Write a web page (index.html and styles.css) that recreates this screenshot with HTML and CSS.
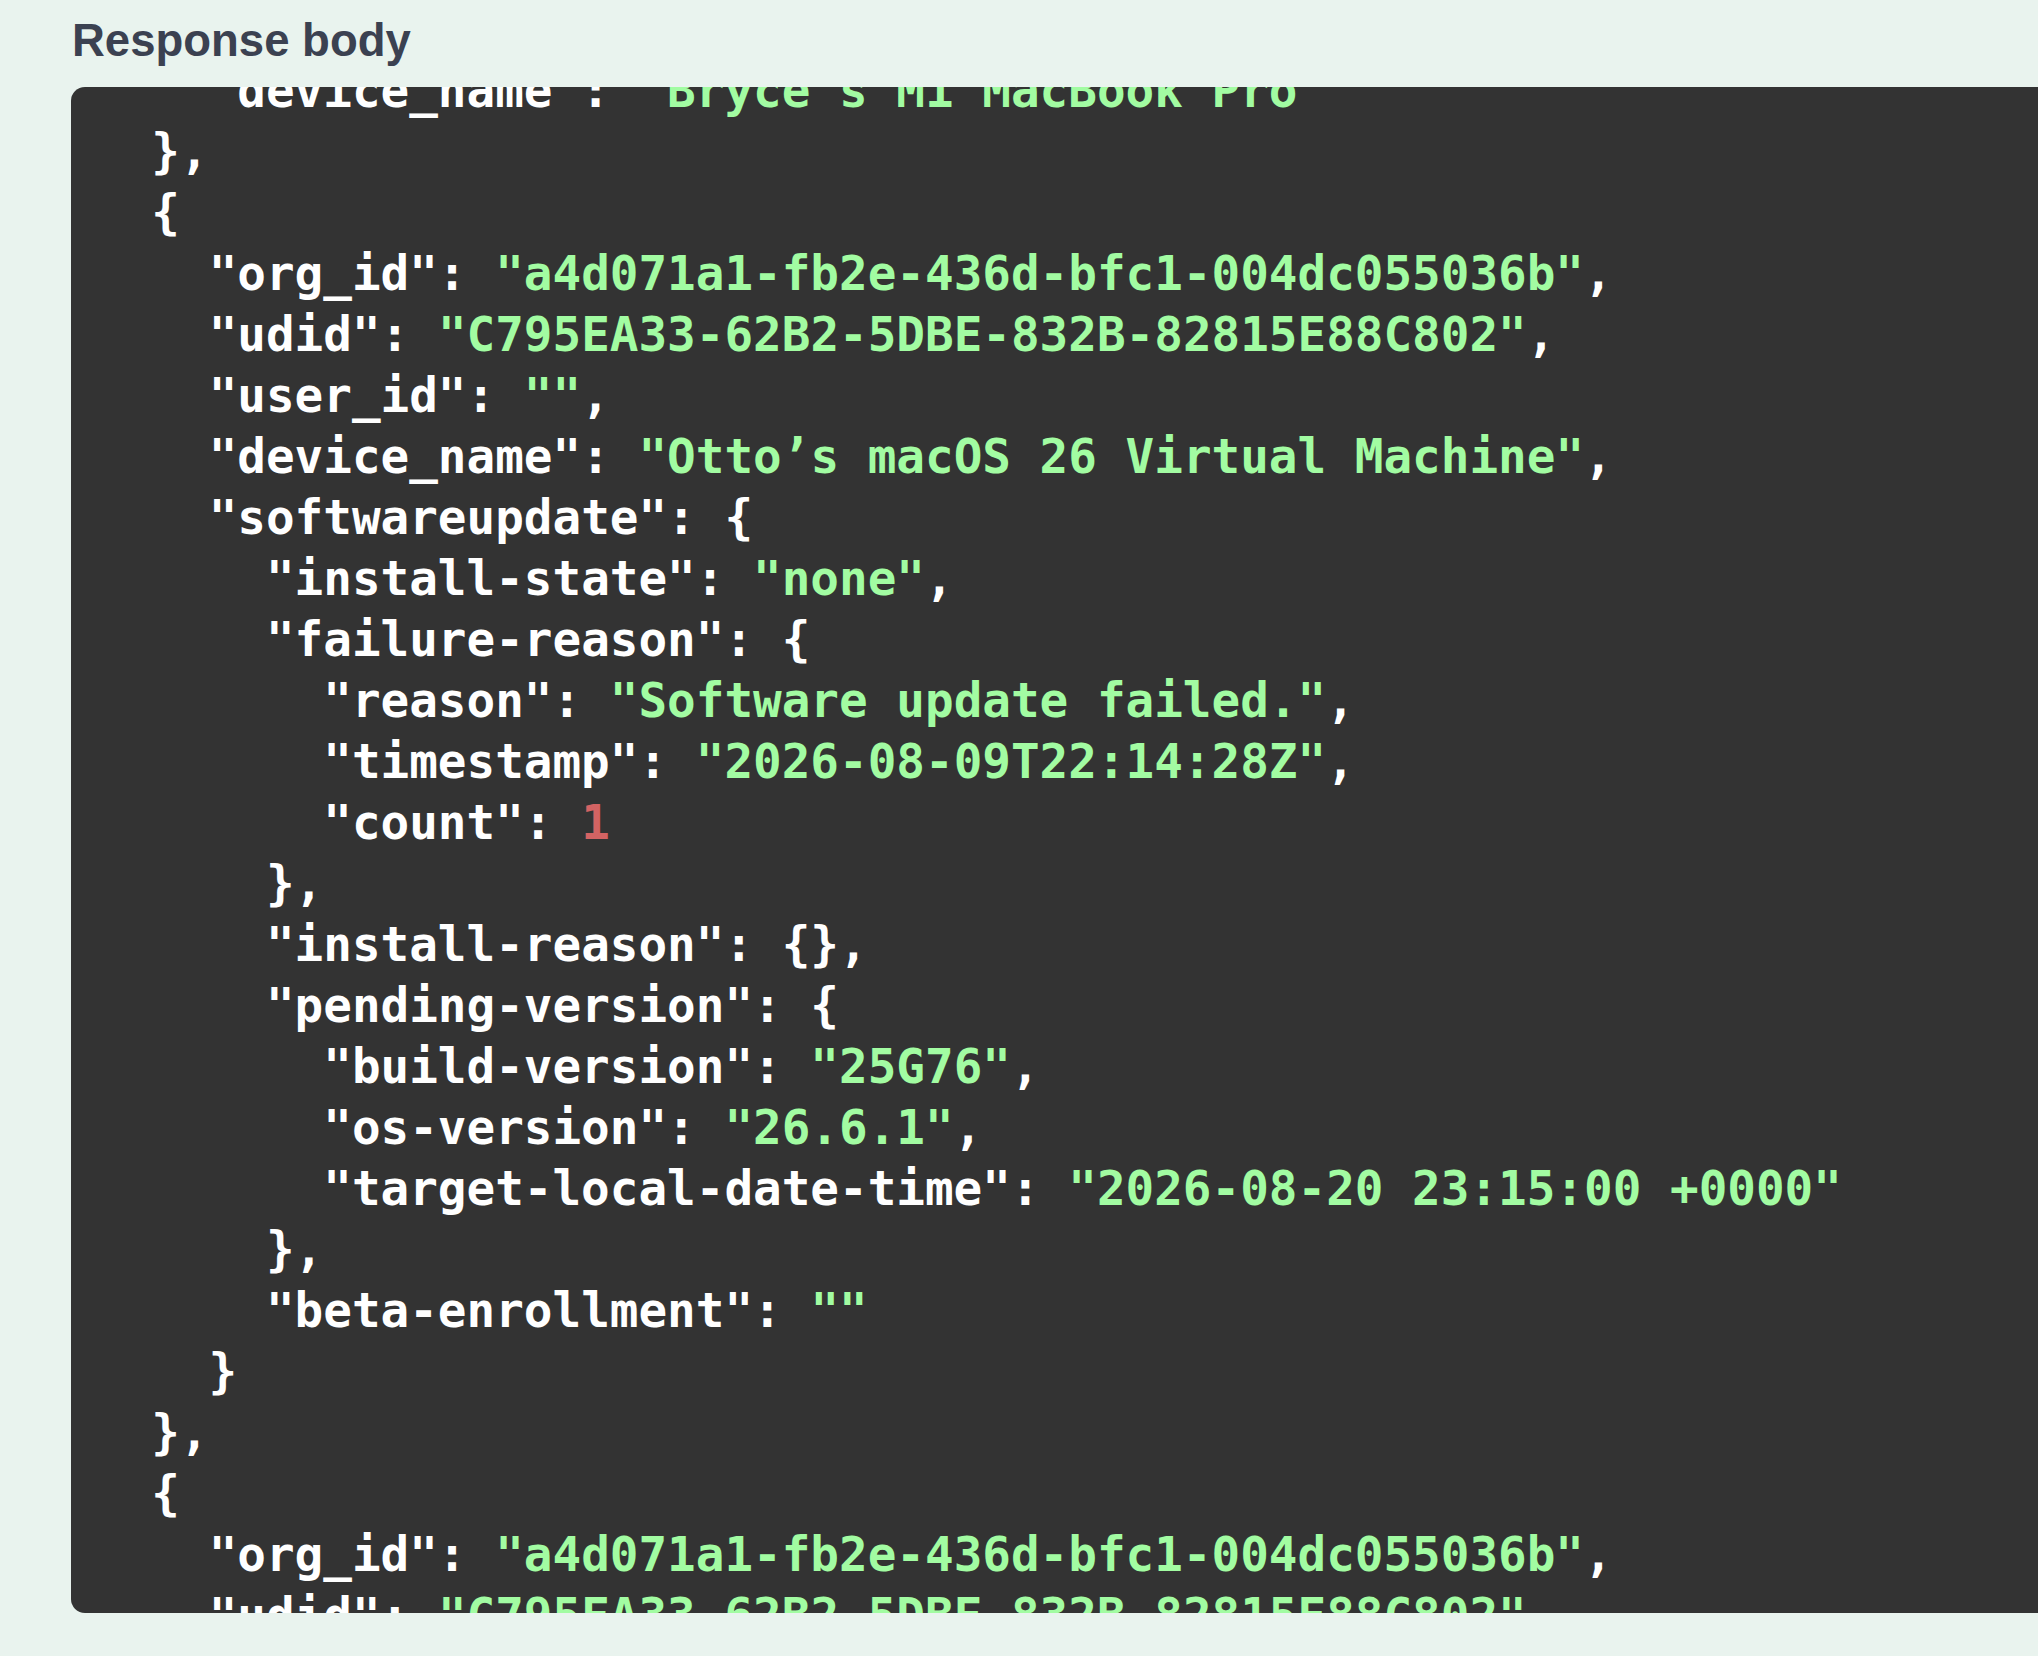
FILE: index.html
```html
<!DOCTYPE html>
<html lang="en">
<head>
<meta charset="utf-8">
<title>Response body</title>
<link rel="stylesheet" href="styles.css">
</head>
<body>
<section class="response">
  <h5 class="title">Response body</h5>
  <div class="code">
<pre class="json">    <span class="k">"device_name"</span>: <span class="s">"Bryce’s M1 MacBook Pro"</span>
  },
  {
    <span class="k">"org_id"</span>: <span class="s">"a4d071a1-fb2e-436d-bfc1-004dc055036b"</span>,
    <span class="k">"udid"</span>: <span class="s">"C795EA33-62B2-5DBE-832B-82815E88C802"</span>,
    <span class="k">"user_id"</span>: <span class="s">""</span>,
    <span class="k">"device_name"</span>: <span class="s">"Otto’s macOS 26 Virtual Machine"</span>,
    <span class="k">"softwareupdate"</span>: {
      <span class="k">"install-state"</span>: <span class="s">"none"</span>,
      <span class="k">"failure-reason"</span>: {
        <span class="k">"reason"</span>: <span class="s">"Software update failed."</span>,
        <span class="k">"timestamp"</span>: <span class="s">"2026-08-09T22:14:28Z"</span>,
        <span class="k">"count"</span>: <span class="n">1</span>
      },
      <span class="k">"install-reason"</span>: {},
      <span class="k">"pending-version"</span>: {
        <span class="k">"build-version"</span>: <span class="s">"25G76"</span>,
        <span class="k">"os-version"</span>: <span class="s">"26.6.1"</span>,
        <span class="k">"target-local-date-time"</span>: <span class="s">"2026-08-20 23:15:00 +0000"</span>
      },
      <span class="k">"beta-enrollment"</span>: <span class="s">""</span>
    }
  },
  {
    <span class="k">"org_id"</span>: <span class="s">"a4d071a1-fb2e-436d-bfc1-004dc055036b"</span>,
    <span class="k">"udid"</span>: <span class="s">"C795EA33-62B2-5DBE-832B-82815E88C802"</span>,
    <span class="k">"user_id"</span>: <span class="s">""</span>,
</pre>
  </div>
</section>
</body>
</html>
```

FILE: styles.css
```css
html, body {
  margin: 0;
  padding: 0;
}

body {
  background: #e9f3ee;
  overflow: hidden;
  height: 1656px;
}

.response {
  padding: 18px 0 0 71px;
}

.title {
  margin: 0 0 24px 1px;
  font-family: "Liberation Sans", Arial, Helvetica, sans-serif;
  font-weight: bold;
  font-size: 45.5px;
  line-height: 45px;
  color: #3b4151;
}

.code {
  width: 2000px;
  height: 1526px;
  background: #333333;
  border-radius: 14px;
  overflow: hidden;
}

.json {
  margin: -27px 0 0 0;
  padding: 0 0 0 23px;
  font-family: "DejaVu Sans Mono", "Liberation Mono", monospace;
  font-weight: bold;
  font-size: 47.6px;
  line-height: 61px;
  color: #ffffff;
  white-space: pre;
}

.k {
  color: #ffffff;
}

.s {
  color: #a2fca2;
}

.n {
  color: #d36363;
}
```
